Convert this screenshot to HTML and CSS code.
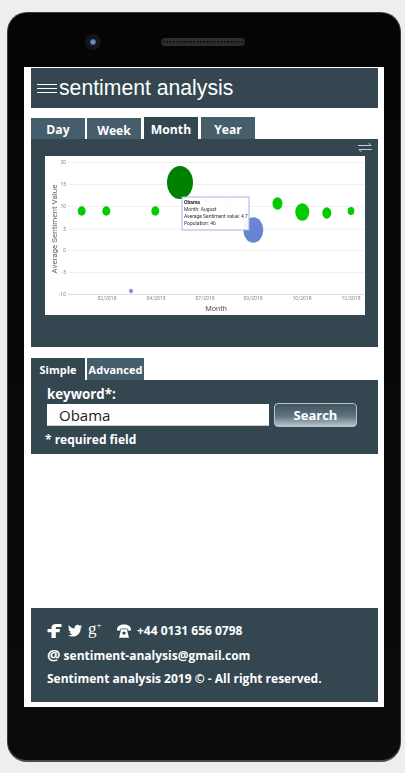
FILE: index.html
```html
<!DOCTYPE html>
<html lang="en">
<head>
<meta charset="utf-8">
<title>sentiment analysis</title>
<link rel="stylesheet" href="styles.css">
</head>
<body>
<div class="canvas">
  <div class="phone">
    <div class="sensors">
      <span class="camera"><span class="lens"></span></span>
      <span class="speaker"></span>
    </div>
    <main class="screen">
      <header class="app-header">
        <span class="burger"><i></i><i></i><i></i></span>
        <h1>sentiment analysis</h1>
      </header>
      <nav class="tabs period-tabs">
        <a class="tab low">Day</a>
        <a class="tab low week">Week</a>
        <a class="tab active raised">Month</a>
        <a class="tab raised">Year</a>
      </nav>
      <section class="chart-panel">
        <svg class="swap" width="14" height="11" viewBox="0 0 14 11" fill="none" stroke="#c4ccd0" stroke-width="1">
          <path d="M0 3.500H13M10.500 1L13 3.500M14 7.500H1M3.500 10L1 7.500"/>
        </svg>
        <div class="chart">
          <svg class="plot" width="320" height="159" viewBox="45 156 320 159">
            <g stroke="#efefef" stroke-width="1.200">
              <path d="M68 162.500H364M68 184.500H364M68 206.500H364M68 229H364M68 250.500H364M68 272.500H364"/>
              <path d="M68 294.500H364" stroke="#ddd"/>
            </g>
            <g class="ylab" text-anchor="end">
              <text x="66" y="164">20</text><text x="66" y="186">15</text><text x="66" y="208">10</text><text x="66" y="231">5</text><text x="66" y="252">0</text><text x="66" y="274">-5</text><text x="66" y="296">-10</text>
            </g>
            <text class="ytitle" transform="translate(57 229) rotate(-90)" text-anchor="middle">Average Sentiment Value</text>
            <g class="xlab" text-anchor="middle">
              <text x="107" y="300">02/2018</text><text x="156" y="300">04/2018</text><text x="205" y="300">07/2018</text><text x="253" y="300">09/2018</text><text x="302" y="300">10/2018</text><text x="351" y="300">12/2018</text>
            </g>
            <text class="xtitle" x="216" y="311" text-anchor="middle">Month</text>
            <g fill="#00cc00">
              <ellipse cx="81.700" cy="211" rx="4" ry="4.700"/>
              <ellipse cx="106.300" cy="211" rx="4" ry="4.700"/>
              <ellipse cx="155.300" cy="211" rx="4" ry="4.700"/>
              <ellipse cx="277.500" cy="203.500" rx="5" ry="6.200"/>
              <ellipse cx="302.300" cy="212" rx="7" ry="8.800"/>
              <ellipse cx="326.800" cy="213" rx="4.500" ry="5.700"/>
              <ellipse cx="351" cy="211" rx="3.300" ry="4"/>
            </g>
            <g fill="#e4f7e4">
              <ellipse cx="204" cy="201.500" rx="3.600" ry="4.500"/>
              <ellipse cx="229" cy="201.500" rx="3.600" ry="4.500"/>
            </g>
            <ellipse cx="180" cy="182.500" rx="13" ry="16.500" fill="#008000"/>
            <ellipse cx="253.300" cy="230" rx="10" ry="12.700" fill="#6a84d4"/>
            <ellipse cx="131" cy="291" rx="2" ry="2.300" fill="#7a90d6"/>
            <rect x="182" y="197" width="67" height="33" fill="#fff" fill-opacity="0.92" stroke="#a3b5e6" stroke-width="1"/>
            <g class="tip" transform="translate(184 0) scale(0.86 1)">
              <text class="tip-name" x="0" y="204">Obama</text>
              <text x="0" y="211">Month: August</text>
              <text x="0" y="218">Average Sentiment value: 4.7</text>
              <text x="0" y="225">Population: 46</text>
            </g>
          </svg>
        </div>
      </section>
      <nav class="tabs search-tabs">
        <a class="tab active simple">Simple</a>
        <a class="tab advanced">Advanced</a>
      </nav>
      <section class="search-panel">
        <label class="kw-label" for="kw">keyword*:</label>
        <div class="search-row">
          <input class="kw-input" id="kw" value="Obama">
          <button class="search-btn">Search</button>
        </div>
        <p class="required">* required field</p>
      </section>
      <div class="spacer"></div>
      <footer class="app-footer">
        <div class="contact">
          <span class="socials">
            <svg width="15" height="14" viewBox="0 0 15 14" fill="#fff"><path d="M4.500 14V8.200H.5V5H4.500V3.600C4.500 1.200 6.200 0 8.700 0H14.500V3H10.200C9.200 3 8.800 3.400 8.800 4.200V5H13L12.500 8.200H8.800V14Z"/></svg>
            <svg width="14" height="13" viewBox="0 0 14 13" fill="#fff"><path d="M14 2.200C13.500 2.500 13 2.600 12.400 2.700 13 2.300 13.400 1.800 13.600 1.100 13 1.400 12.400 1.700 11.800 1.800 11.200 1.200 10.400.8 9.600.8 8 .8 6.600 2.200 6.600 3.800 6.600 4 6.700 4.300 6.700 4.500 4.200 4.400 2 3.200.9 1.200.6 1.700.5 2.200.5 2.700.5 3.800 1 4.700 1.800 5.200 1.300 5.200.9 5 .5 4.800 .5 6.300 1.600 7.500 2.900 7.800 2.400 7.900 2 8 1.500 7.900 1.900 9.100 3 10 4.300 10 3.300 10.800 1.600 11.400 0 11.200 1.300 12.100 2.900 12.600 4.500 12.600 9.800 12.600 12.700 8.200 12.700 4.400V4C13.200 3.600 13.700 3 14 2.200Z"/></svg>
            <span class="gplus">g<sup>+</sup></span>
          </span>
          <svg class="phone-ico" width="14" height="14" viewBox="0 0 14 14" fill="#fff"><path d="M0 5.500C0 2.500 3 .5 7 .5S14 2.500 14 5.500V6.500H10.600V4.800C9.500 4.300 4.500 4.300 3.400 4.800V6.500H0Z"/><path fill-rule="evenodd" d="M4.200 5.200H9.800L12 13.800H2ZM7 7.400A1.700 1.700 0 1 0 7 10.800 1.700 1.700 0 1 0 7 7.400Z"/></svg>
          <span>+44 0131 656 0798</span>
        </div>
        <div class="mail"><span class="at">@</span> sentiment-analysis@gmail.com</div>
        <div class="copy">Sentiment analysis 2019 © - All right reserved.</div>
      </footer>
    </main>
  </div>
</div>
</body>
</html>
```

FILE: styles.css
```css
* { box-sizing: border-box; }
html, body { margin: 0; padding: 0; background: #fff; }
.canvas {
  width: 405px;
  height: 773px;
  padding: 12px 4px 0 7px;
  background: #eee;
  overflow: hidden;
}
.phone {
  width: 394px;
  height: 750px;
  padding: 0 16px;
  background: linear-gradient(#050505, #0b0b0b);
  border: 1px solid #3a3a3a;
  border-bottom: 2px solid #4a4a4a;
  border-radius: 20px;
  display: flex;
  flex-direction: column;
}
.sensors {
  height: 54px;
  flex: none;
  display: flex;
  align-items: center;
  padding: 4px 0 0 61px;
}
.camera {
  width: 16px;
  height: 16px;
  border-radius: 50%;
  background: #14161a;
  display: flex;
  align-items: center;
  justify-content: center;
}
.lens {
  width: 6px;
  height: 6px;
  border-radius: 50%;
  background: radial-gradient(#6d93d8 30%, #1e2a44);
}
.speaker {
  width: 84px;
  height: 8px;
  margin-left: 60px;
  border-radius: 4px;
  background: #2a2c30 radial-gradient(circle, #111 0.8px, transparent 1px) 1px 0 / 3.4px 8px repeat-x;
}
.screen {
  width: 360px;
  height: 640px;
  padding: 1px 6px 5px 7px;
  background: #fff;
  display: flex;
  flex-direction: column;
  font-family: "Open Sans", sans-serif;
  font-weight: 700;
  color: #fff;
}
.app-header {
  height: 40px;
  flex: none;
  padding-left: 6px;
  background: #344751;
  display: flex;
  align-items: center;
  gap: 2px;
}
.burger {
  width: 20px;
  display: flex;
  flex-direction: column;
  gap: 3px;
}
.burger i { height: 1px; background: #fff; }
.app-header h1 {
  margin: 0;
  font: 400 21.200px "Liberation Sans", Arial, sans-serif;
}
.tabs { display: flex; flex: none; }
.period-tabs {
  height: 22px;
  margin-top: 9px;
  gap: 3px;
  align-items: flex-start;
  font-size: 12.200px;
}
.tab {
  width: 54px;
  height: 22px;
  background: #465d6c;
  display: flex;
  align-items: center;
  justify-content: center;
}
.tab.active { background: #344751; }
.tab.raised { padding-top: 2px; }
.tab.low { height: 23px; margin-top: 1px; }
.tab.week { margin-left: -1px; padding-top: 2px; }
.chart-panel {
  height: 208px;
  flex: none;
  padding: 17px 13px 0 14px;
  background: #344751;
  position: relative;
}
.swap { position: absolute; top: 3px; right: 6px; }
.chart { width: 320px; height: 159px; background: #fff; overflow: hidden; }
.plot { display: block; filter: blur(0.5px); }
.plot text { font-family: "Roboto", sans-serif; font-weight: 400; }
.ylab text, .xlab text { font-size: 5px; fill: #888; }
.ytitle { font-size: 8px; fill: #666; }
.xtitle { font-size: 7.500px; fill: #555; }
.tip text { font-size: 5.800px; fill: #333; }
.tip .tip-name { font-weight: 700; fill: #222; }
.search-tabs {
  height: 22px;
  margin-top: 11px;
  gap: 2px;
  font-size: 11px;
}
.tab.advanced { width: 57px; }
.search-panel {
  height: 74px;
  flex: none;
  padding: 6px 21px 0 14px;
  background: #344751;
}
.kw-label {
  display: block;
  height: 17px;
  padding-left: 2px;
  font-size: 13.300px;
  line-height: 17px;
}
.search-row {
  display: flex;
  align-items: center;
  gap: 5px;
  padding-left: 2px;
}
.kw-input {
  width: 222px;
  height: 22px;
  padding: 0 12px;
  border: 0;
  border-bottom: 1px solid #ccc;
  background: #fff;
  color: #222;
  font: 400 15px "Open Sans", sans-serif;
}
.search-btn {
  width: 83px;
  height: 24px;
  padding: 0;
  border: 1px solid #b8c4cb;
  border-radius: 4px;
  background: linear-gradient(#41535f, #5d7380 55%, #b7c3ca);
  color: #fff;
  font: 700 13px "Open Sans", sans-serif;
}
.required {
  margin: 5px 0 0;
  font-size: 12px;
  line-height: 16px;
}
.spacer { flex: 1; }
.app-footer {
  height: 94px;
  flex: none;
  padding: 12px 16px 0;
  background: #344751;
  font-size: 12px;
}
.contact { height: 21px; display: flex; align-items: center; }
.socials { width: 70px; display: flex; align-items: center; gap: 6px; }
.gplus {
  font: 400 17px "Liberation Serif", serif;
  line-height: 14px;
  padding-bottom: 3px;
}
.gplus sup { font-size: 9px; line-height: 0; vertical-align: 6px; }
.phone-ico { margin-right: 6px; }
.mail { margin-top: 3px; height: 21px; line-height: 21px; }
.at { font-size: 15px; }
.copy { margin-top: 3px; height: 21px; line-height: 21px; }
```
